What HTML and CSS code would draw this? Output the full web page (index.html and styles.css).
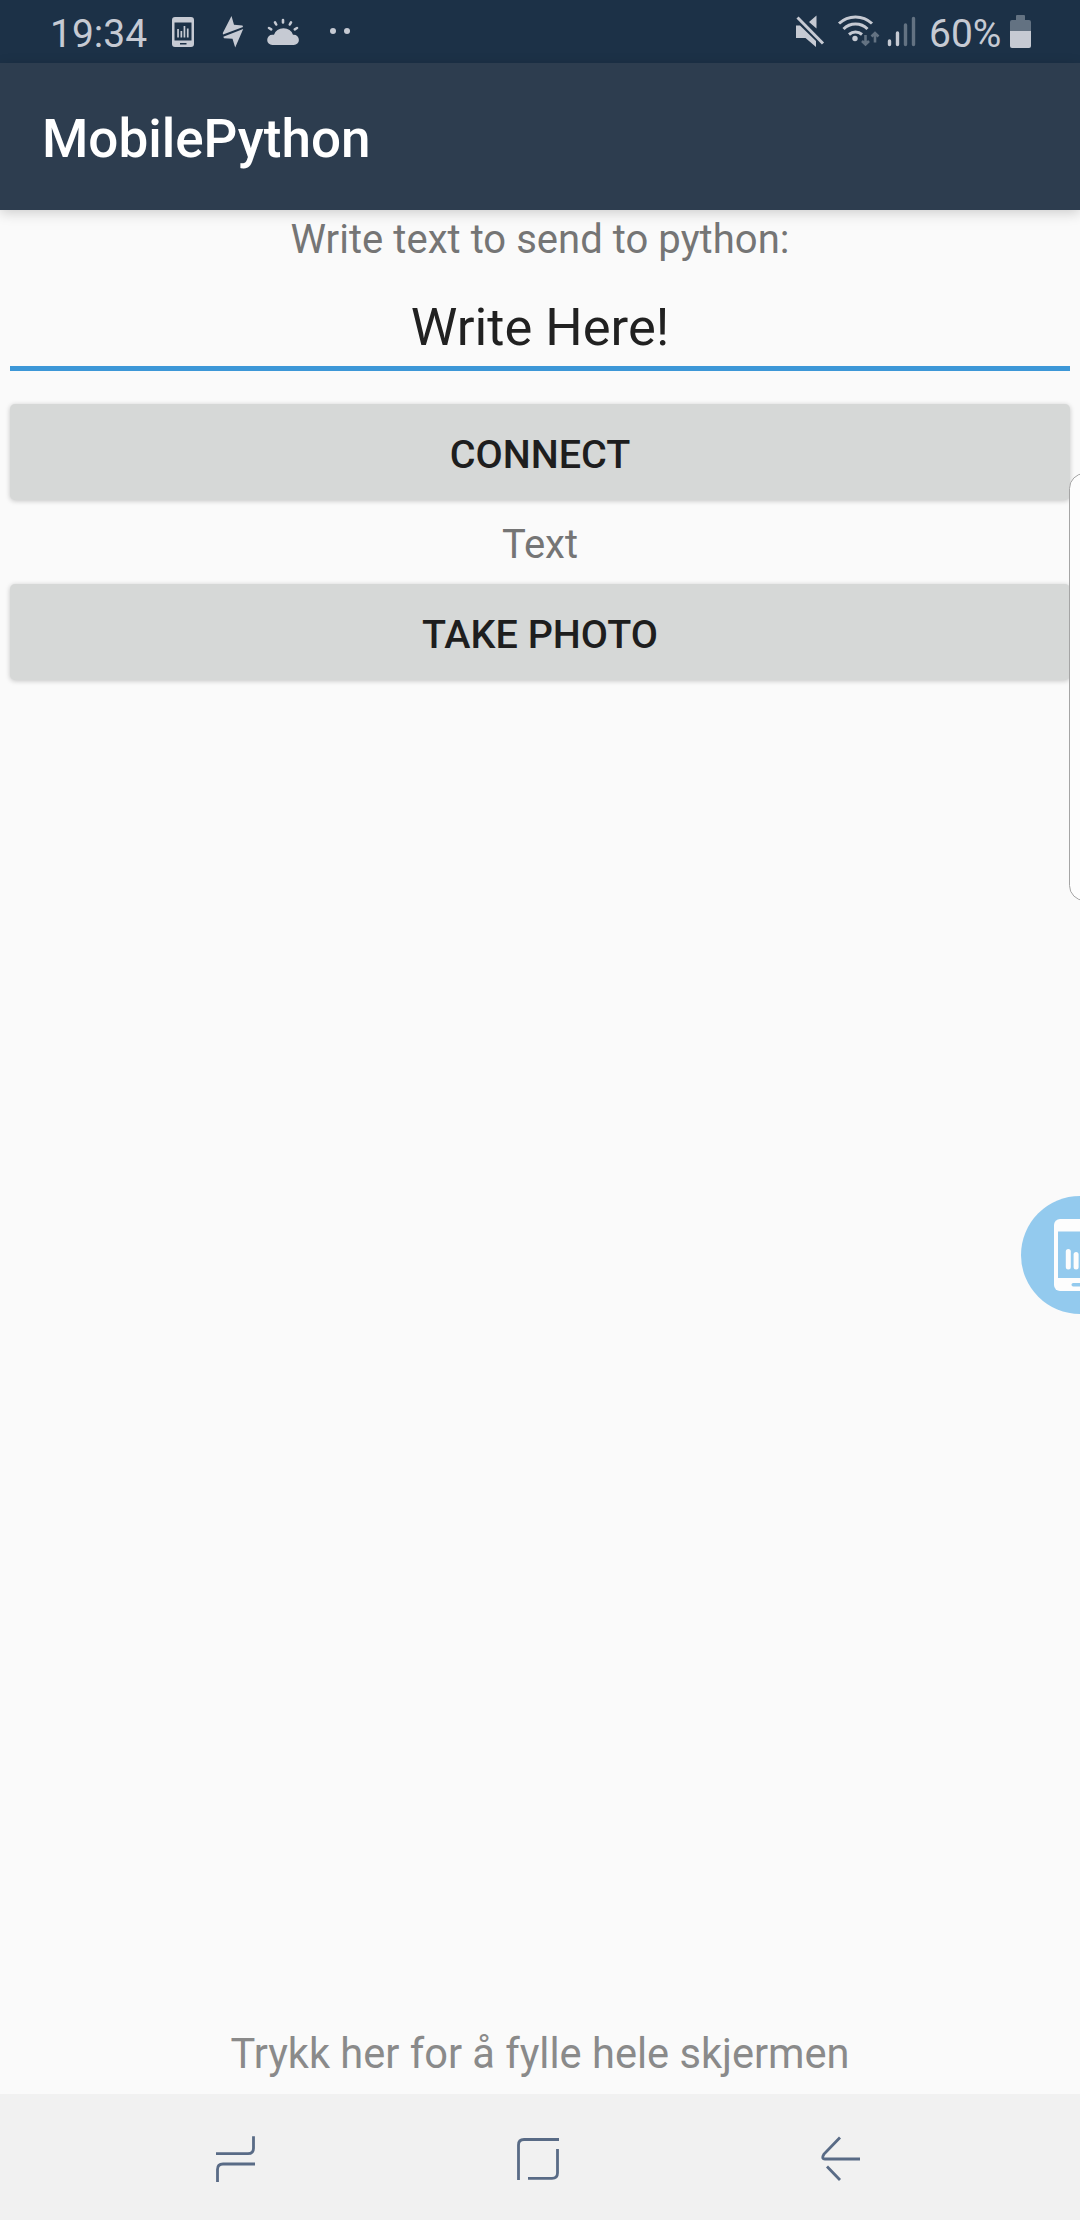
FILE: index.html
```html
<!DOCTYPE html>
<html lang="nb">
<head>
<meta charset="utf-8">
<title>MobilePython</title>
<link rel="stylesheet" href="styles.css">
</head>
<body>
<div class="screen">
  <header class="status-bar">
    <span class="clock">19:34</span>
    <svg class="status-icons" width="190" height="63" viewBox="160 0 190 63">
      <path fill-rule="evenodd" d="M175 17h16q3 0 3 3v24q0 3-3 3h-16q-3 0-3-3V20q0-3 3-3zM174.500 22.500v18h17v-18zM180 43v1.600h6.500V43z"/>
      <path d="M177.200 29h1.700v8.500h-1.700zM180.500 31h1.700v6.500h-1.700zM183.600 26h1.700v11.500h-1.700zM186.900 28.500h1.700v9h-1.700z"/>
      <path d="M231.500 16L234 24.700L242.500 25.600L243 27L223 34.600L222.800 33zM243.200 29L235.200 47.500L232.500 38.700L224 38.200L223.300 36.700z"/>
      <path d="M272.300 45h21.500a5 5 0 0 0 0-10.200h-.8a10 9.500 0 0 0-19 0h-1.700a5 5 0 0 0 0 10.200z"/>
      <path class="rays" d="M283 20v2.500M275 22.300l1.200 2.200M291 22.300l-1.200 2.200M269 28l2.200 1.300M297 28l-2.200 1.300"/>
      <circle cx="333" cy="31" r="3"/><circle cx="347" cy="31" r="3"/>
    </svg>
    <svg class="status-icons signals" width="126" height="63" viewBox="790 0 126 63">
      <path d="M795 25.500h4l16 15.500v6l-10.500-9H795zM808 22l7.500-6.500v13z"/>
      <path class="slash" d="M796.500 17.500l25.500 26"/>
      <g class="wifi"><path d="M838 23.500a24 24 0 0 1 33 0M842.500 29a17 17 0 0 1 24 0M848 34.500a10 10 0 0 1 13 0"/></g>
      <circle cx="854" cy="38.500" r="2.700"/>
      <g class="arrows"><path d="M864.500 35v9M861 41l3.500 3.500 3.500-3.500M874 42.500v-9M870.500 36.500l3.500-3.500 3.500 3.500"/></g>
      <g class="bars"><path d="M888.500 41v3.500M896.500 33v11.500"/><path class="dim" d="M904.500 25v19.500M912.500 18.500v26"/></g>
    </svg>
    <span class="percent">60%</span>
    <svg class="battery" width="21" height="33" viewBox="0 0 21 33"><path class="empty" d="M2 5h4V1q0-1 1-1h7q1 0 1 1v4h4q2 0 2 2v9H0V7q0-2 2-2z"/><path d="M0 16h21v15q0 2-2 2H2q-2 0-2-2z"/></svg>
  </header>
  <div class="app-bar"><h1>MobilePython</h1></div>
  <main class="content">
    <p class="label prompt">Write text to send to python:</p>
    <div class="field">Write Here!</div>
    <button class="button" type="button">CONNECT</button>
    <p class="label result">Text</p>
    <button class="button" type="button">TAKE PHOTO</button>
  </main>
  <p class="fill-hint">Trykk her for å fylle hele skjermen</p>
  <nav class="nav-bar">
    <svg width="44" height="50" viewBox="213 2133 44 50"><path d="M216 2153.700h32q5.500 0 5.500-5.500v-12M217.500 2182v-12.500q0-5.500 5.500-5.500h32"/></svg>
    <svg width="44" height="50" viewBox="515 2133 44 50"><path d="M517.500 2180v-35q0-5.500 5.500-5.500H558M556.500 2149v24q0 5.300-5.500 5.300h-24"/></svg>
    <svg width="44" height="50" viewBox="819 2133 44 50"><path d="M840 2137.500l-16 16.500q-3 5 1 5h35M827 2166.500l13 13.500"/></svg>
  </nav>
  <div class="edge-panel"></div>
  <div class="bubble">
    <svg width="59" height="118" viewBox="1021 1196 59 118">
      <rect class="body" x="1054" y="1219" width="60" height="72" rx="6"/>
      <path class="glass" d="M1058 1231.500h22v46.500h-22z"/>
      <rect class="body" x="1065.800" y="1249" width="5" height="20.500" rx="2.500"/>
      <rect class="body" x="1073.600" y="1252" width="5" height="17.500" rx="2.500"/>
      <rect class="glass" x="1071.500" y="1283" width="20" height="3.500" rx="1.700"/>
    </svg>
  </div>
</div>
</body>
</html>
```
FILE: styles.css
```css
* { box-sizing: border-box; }
body { margin: 0; font-family: Roboto, "Liberation Sans", sans-serif; }
h1, p { margin: 0; font-weight: 400; }
.screen { position: relative; display: flex; flex-direction: column; width: 1080px; height: 2220px; overflow: hidden; background: #fafafa; }
.status-bar { display: flex; flex: none; align-items: center; height: 63px; padding: 0 49px 0 50px; background: #1c3147; color: #c6cad3; font-size: 39px; }
.clock { width: 110px; padding-top: 5px; }
.status-icons { fill: #c6cad3; overflow: visible; }
.rays { stroke: #c6cad3; stroke-width: 2.6; stroke-linecap: round; }
.signals { margin-left: auto; }
.slash { stroke: #c6cad3; stroke-width: 3; }
.wifi { fill: none; stroke: #c6cad3; stroke-width: 3; }
.arrows { fill: none; stroke: #637282; stroke-width: 2.6; }
.bars { stroke: #c6cad3; stroke-width: 3.4; stroke-linecap: round; }
.bars .dim { stroke: #637282; }
.percent { width: 77px; margin-left: 12px; padding-top: 5px; white-space: nowrap; }
.battery { fill: #c6cad3; margin-left: 4px; }
.battery .empty { fill: #637282; }
.app-bar { z-index: 1; display: flex; flex: none; align-items: center; height: 147px; padding: 4px 42px 0; background: #2d3d4f; box-shadow: 0 3px 12px rgba(0, 0, 0, .18); color: #fff; }
.app-bar h1 { font-size: 53px; font-weight: 500; line-height: 62px; }
.content { display: flex; flex: 1; flex-direction: column; padding: 0 10px; text-align: center; }
.label { color: #757575; font-size: 40px; line-height: 48px; }
.prompt { padding-top: 6px; letter-spacing: .04px; }
.field { height: 82px; margin: 25px 0 33px; border-bottom: 5px solid #3c97d7; padding-top: 6px; color: #212121; font-size: 52.5px; line-height: 64px; }
.button { height: 96px; border: 0; border-radius: 5px; padding: 4px 0 0; background: #d6d8d7; box-shadow: 0 1px 5px rgba(0, 0, 0, .22); color: #1e1e1e; font-family: inherit; font-size: 39.5px; font-weight: 500; }
.result { height: 84px; padding-top: 21px; }
.fill-hint { flex: none; height: 74px; color: #8a8a8a; font-size: 41.6px; line-height: 67px; text-align: center; }
.nav-bar { display: flex; flex: none; align-items: center; justify-content: space-between; height: 126px; padding: 2px 217px 0 213px; background: #f1f1f1; }
.nav-bar svg { fill: none; stroke: #596b86; stroke-width: 2.8; stroke-linecap: butt; }
.edge-panel { position: absolute; z-index: 2; top: 473px; right: -20px; width: 31px; height: 428px; border: 1px solid #a5a5a5; border-radius: 16px; background: #fdfdfd; }
.bubble { position: absolute; top: 1196px; right: 0; width: 59px; height: 118px; border-radius: 59px 0 0 59px; background: #93caee; }
.bubble svg { display: block; }
.bubble .body { fill: #fdfdfd; }
.bubble .glass { fill: #93caee; }
```
